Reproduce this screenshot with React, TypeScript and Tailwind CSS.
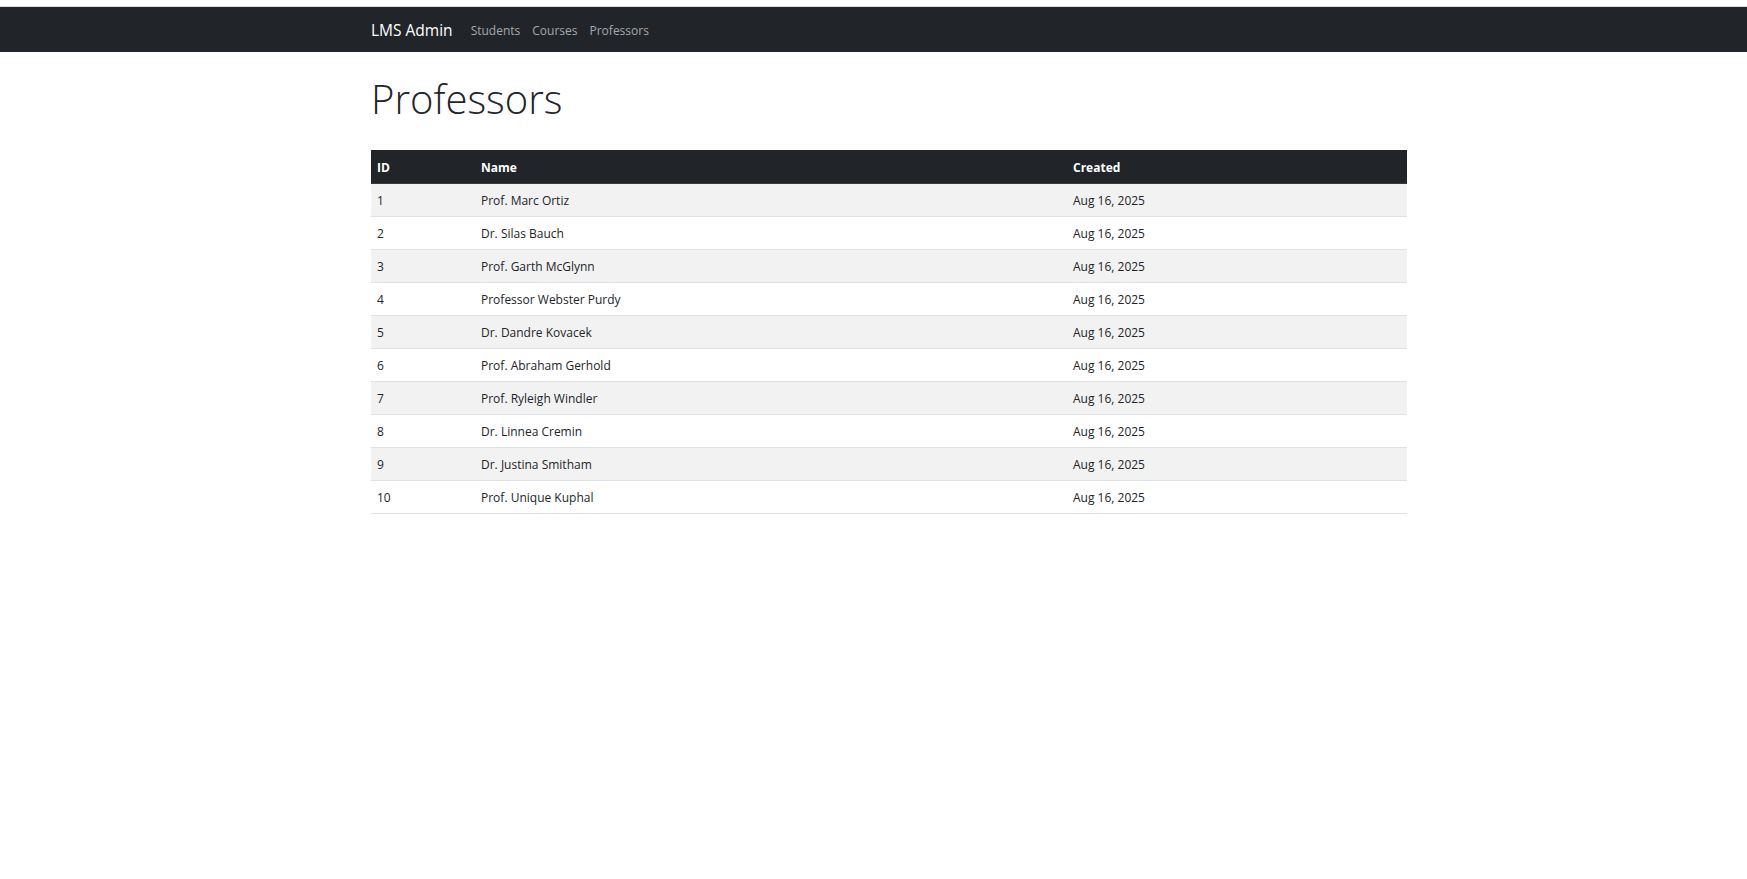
const professors = [
  { id: 1, name: "Prof. Marc Ortiz" },
  { id: 2, name: "Dr. Silas Bauch" },
  { id: 3, name: "Prof. Garth McGlynn" },
  { id: 4, name: "Professor Webster Purdy" },
  { id: 5, name: "Dr. Dandre Kovacek" },
  { id: 6, name: "Prof. Abraham Gerhold" },
  { id: 7, name: "Prof. Ryleigh Windler" },
  { id: 8, name: "Dr. Linnea Cremin" },
  { id: 9, name: "Dr. Justina Smitham" },
  { id: 10, name: "Prof. Unique Kuphal" },
];

const links = ["Students", "Courses", "Professors"];

export default function App() {
  return (
    <div className="min-h-screen bg-white pt-[6px] font-['Open_Sans',sans-serif] text-[#212529]">
      {/* Navbar */}
      <nav className="border-t border-[#d9d9d9] bg-[#212529]">
        <div className="ml-[371px] flex h-[45px] w-[1036px] items-center pt-[3px]">
          <span className="mr-[12px] text-[15.5px] text-white">LMS Admin</span>
          {links.map((l) => (
            <span key={l} className="px-[6px] text-[12px] text-[#a6a8aa]">
              {l}
            </span>
          ))}
        </div>
      </nav>

      <main className="ml-[371px] w-[1036px]">
        <h1 className="mt-[20px] mb-[24px] text-[40px] leading-[54px] font-light">Professors</h1>

        <table className="w-full border-collapse text-[12px]">
          <thead>
            <tr className="h-[33px] border-b border-[#373b3e] bg-[#212529] text-left font-bold text-white">
              <th className="w-[104px] px-[6px] pt-[3px]">ID</th>
              <th className="w-[592px] px-[6px] pt-[3px]">Name</th>
              <th className="px-[6px] pt-[3px]">Created</th>
            </tr>
          </thead>
          <tbody>
            {professors.map((p, i) => (
              <tr
                key={p.id}
                className={`h-[33px] border-b border-[#dee2e6] ${i % 2 === 0 ? "bg-[#f2f2f2]" : "bg-white"}`}
              >
                <td className="px-[6px] pt-[3px]">{p.id}</td>
                <td className="px-[6px] pt-[3px]">{p.name}</td>
                <td className="px-[6px] pt-[3px]">Aug 16, 2025</td>
              </tr>
            ))}
          </tbody>
        </table>
      </main>
    </div>
  );
}
